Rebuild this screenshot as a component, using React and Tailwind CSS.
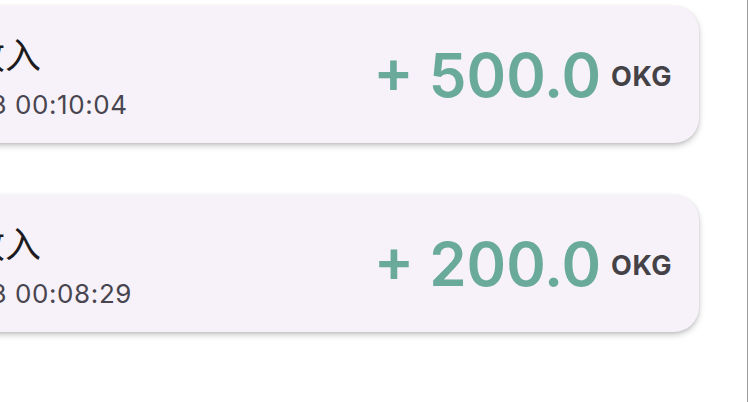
export default function App() {
  const records = [
    { title: '转账收入', time: '2025/1/3 00:10:04', amount: '500.0' },
    { title: '转账收入', time: '2025/1/3 00:08:29', amount: '200.0' },
  ]

  return (
    <div className="relative w-[748px] h-[402px] bg-white overflow-hidden" style={{ fontFamily: 'Inter, "Noto Sans CJK SC", sans-serif' }}>
      <div className="flex flex-col gap-[52px] pt-[6px] ml-[-127px] mr-[49px]">
        {records.map((r, i) => (
          <div
            key={i}
            className="flex items-center justify-between h-[137px] pl-6 pr-[27px] rounded-[25px] bg-[#f7f2fa] shadow-[0_3px_6px_rgba(0,0,0,0.2),0_1px_3px_rgba(0,0,0,0.1)]"
          >
            <div className="flex flex-col pt-[7px]">
              <span className="text-[36px] leading-[36px] text-[#1d1b20]" style={{ fontFamily: '"Noto Sans CJK SC", sans-serif' }}>
                {r.title}
              </span>
              <span className="mt-[18px] ml-[-4px] text-[26px] leading-[32px] tracking-[0.6px] text-[#49454f]">{r.time}</span>
            </div>
            <div className="flex items-center gap-[10px]">
              <span className="text-[60px] leading-none font-semibold text-[#6aaa9b]">+ {r.amount}</span>
              <span className="mt-[3px] text-[27px] leading-none font-bold tracking-[0.5px] text-[#444246]">OKG</span>
            </div>
          </div>
        ))}
      </div>
      <div className="absolute right-0 top-0 h-full w-px bg-[#9e9e9e]" />
    </div>
  )
}
